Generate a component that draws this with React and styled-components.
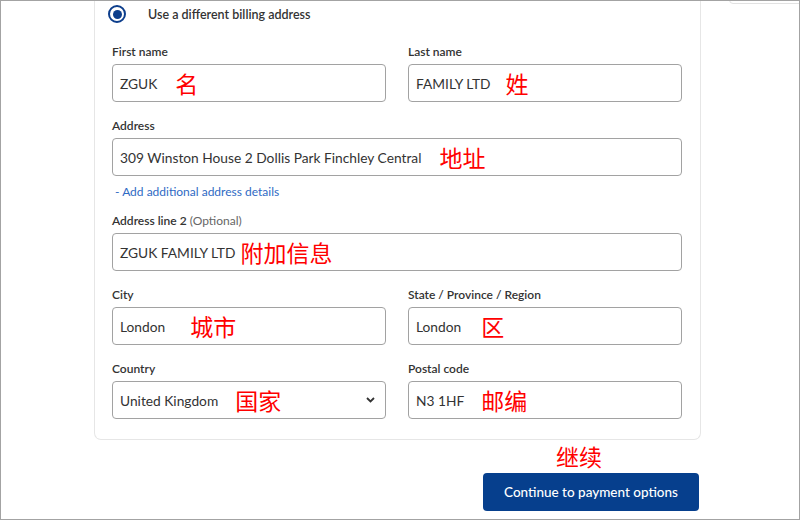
import React from 'react'
import styled, { createGlobalStyle } from 'styled-components'

const Global = createGlobalStyle`
  html, body { margin: 0; padding: 0; background: #fff; }
  * { box-sizing: border-box; }
`

const Frame = styled.div`
  position: relative;
  width: 800px;
  height: 520px;
  border: 1px solid #a3a3a3;
  overflow: hidden;
  background: #fff;
  font-family: Lato, "Liberation Sans", "Noto Sans CJK SC", sans-serif;
  color: #333;
`

const Peek = styled.div`
  position: absolute;
  top: -6px;
  right: -6px;
  width: 76px;
  height: 9px;
  border: 1px solid #e2e2e2;
  border-radius: 4px;
  background: #fff;
`

const Page = styled.div`
  display: flex;
  flex-direction: column;
  width: 607px;
  margin-left: 93px;
`

const Card = styled.div`
  border: 1px solid #e6e6e6;
  border-top: none;
  border-radius: 0 0 7px 7px;
  padding: 0 18px 20px 17px;
  display: flex;
  flex-direction: column;
`

const RadioRow = styled.label`
  display: flex;
  align-items: center;
  height: 28px;
  margin: -1px 0 16px -4px;
  font-size: 12.5px;
  font-weight: 600;
  color: #333;
`

const Radio = styled.span`
  width: 18px;
  height: 18px;
  border-radius: 50%;
  border: 2px solid #0d3e8c;
  display: flex;
  align-items: center;
  justify-content: center;
  margin-right: 22px;

  &::after {
    content: '';
    width: 9px;
    height: 9px;
    border-radius: 50%;
    background: #0d3e8c;
  }
`

const Row = styled.div`
  display: grid;
  grid-template-columns: 274px 274px;
  column-gap: 22px;
`

const Field = styled.div`
  display: flex;
  flex-direction: column;
  margin-bottom: ${p => (p.$last ? '0' : '16px')};
`

const Label = styled.div`
  font-size: 12px;
  font-weight: 600;
  line-height: 16px;
  margin-bottom: 4px;
  color: #333;
`

const Optional = styled.span`
  font-weight: 400;
  color: #666;
`

const Input = styled.div`
  height: 38px;
  border: 1px solid #a2a2a2;
  border-radius: 4px;
  display: flex;
  align-items: center;
  padding: 0 7px;
  font-size: 13.75px;
  color: #333;
`

const Note = styled.span`
  font-family: "Noto Sans CJK SC", sans-serif;
  color: #ff0000;
  font-size: 23px;
  line-height: 1;
  margin-left: ${p => p.$gap}px;
`

const Chevron = styled.svg`
  margin-left: auto;
  margin-right: 3px;
`

const MoreLink = styled.a`
  font-size: 12px;
  line-height: 16px;
  color: #2f6ac4;
  margin: -8px 0 13px 3px;
  text-decoration: none;
`

const Footer = styled.div`
  display: flex;
  flex-direction: column;
  align-items: flex-end;
`

const Hint = styled.div`
  font-family: "Noto Sans CJK SC", sans-serif;
  color: #ff0000;
  font-size: 23px;
  line-height: 26px;
  margin: 3px 99px 4px 0;
`

const Button = styled.button`
  width: 216px;
  height: 38px;
  margin-right: 2px;
  border: none;
  border-radius: 4px;
  background: #063f8d;
  color: #fff;
  font-family: Lato, "Liberation Sans", sans-serif;
  font-size: 13.5px;
  font-weight: 500;
`

const Box = ({ label, optional, value, note, gap, select }) => (
  <>
    <Label>
      {label}
      {optional && <Optional> (Optional)</Optional>}
    </Label>
    <Input>
      {value}
      <Note $gap={gap}>{note}</Note>
      {select && (
        <Chevron width="9" height="6" viewBox="0 0 9 6">
          <path d="M1 1l3.5 3.5L8 1" stroke="#333" strokeWidth="1.8" fill="none" />
        </Chevron>
      )}
    </Input>
  </>
)

export default function App() {
  return (
    <Frame>
      <Global />
      <Peek />
      <Page>
        <Card>
          <RadioRow>
            <Radio />
            Use a different billing address
          </RadioRow>
          <Row>
            <Field>
              <Box label="First name" value="ZGUK" note="名" gap={18} />
            </Field>
            <Field>
              <Box label="Last name" value="FAMILY LTD" note="姓" gap={15} />
            </Field>
          </Row>
          <Field>
            <Box
              label="Address"
              value="309 Winston House 2 Dollis Park Finchley Central"
              note="地址"
              gap={18}
            />
          </Field>
          <MoreLink href="#">- Add additional address details</MoreLink>
          <Field>
            <Box label="Address line 2" optional value="ZGUK FAMILY LTD" note="附加信息" gap={5} />
          </Field>
          <Row>
            <Field>
              <Box label="City" value="London" note="城市" gap={25} />
            </Field>
            <Field>
              <Box label="State / Province / Region" value="London" note="区" gap={20} />
            </Field>
          </Row>
          <Row>
            <Field $last>
              <Box label="Country" value="United Kingdom" note="国家" gap={17} select />
            </Field>
            <Field $last>
              <Box label="Postal code" value="N3 1HF" note="邮编" gap={17} />
            </Field>
          </Row>
        </Card>
        <Footer>
          <Hint>继续</Hint>
          <Button>Continue to payment options</Button>
        </Footer>
      </Page>
    </Frame>
  )
}
